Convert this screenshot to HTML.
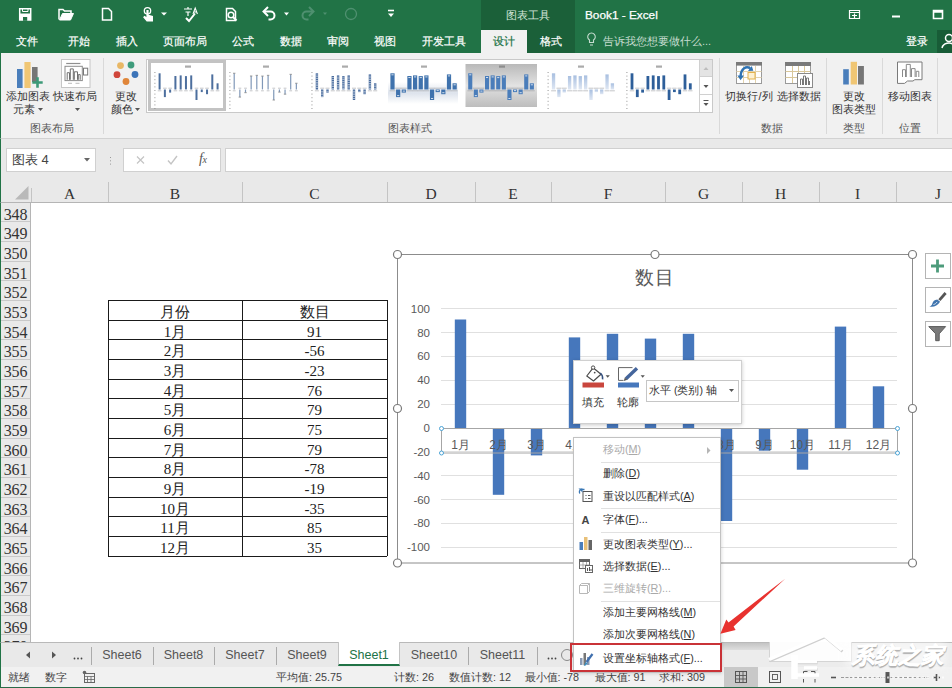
<!DOCTYPE html>
<html lang="zh">
<head>
<meta charset="utf-8">
<title>Book1 - Excel</title>
<style>
*{box-sizing:border-box;margin:0;padding:0}
html,body{width:952px;height:688px;overflow:hidden;background:#fff}
body{font-family:"Liberation Sans",sans-serif;font-size:12px;color:#333;position:relative}
.abs{position:absolute}
.t{position:absolute;white-space:nowrap;line-height:1}
.c{position:absolute;white-space:nowrap;line-height:1;text-align:center}
svg{position:absolute;overflow:visible}
#title{left:0;top:0;width:952px;height:53px;background:#217346}
#title .t,#title .c{color:#fff}
.mtab{font-size:11px;top:35.600px;width:60px;-webkit-text-stroke:0.2px currentColor}
#ribbon{left:0;top:53px;width:952px;height:86px;background:#f1f1f1;border-bottom:1px solid #d2d2d2;border-left:1px solid #217346}
.rl{font-size:11px;color:#333}
.gl{font-size:11px;color:#555}
.vsep{position:absolute;top:5px;width:1px;height:76px;background:#d9d9d9}
#fbar{left:0;top:139px;width:952px;height:41px;background:#e9e9e9;border-left:1px solid #217346}
#colhdr{left:0;top:180px;width:952px;height:23px;background:#e9e9e9;border-bottom:1px solid #b5b5b5;border-left:1px solid #217346}
#colhdr .c{font-family:"Liberation Serif",serif;font-size:15.5px;color:#333;top:5.5px}
.cs{position:absolute;top:2px;width:1px;height:20px;background:#c4c4c4}
#rowhdr{left:0;top:203px;width:31px;height:439px;background:#e9e9e9;border-right:1px solid #b5b5b5;border-left:1px solid #217346;overflow:hidden}
#rowhdr div{position:absolute;left:0;width:29px;font-family:"Liberation Serif",serif;font-size:16px;line-height:24px;color:#333;text-align:center;border-bottom:1px solid #c9c9c9;letter-spacing:-0.2px}
#tbl{left:108px;top:300px;width:280px;height:256px}
#tbl .cell{position:absolute;font-family:"Liberation Serif",serif;font-size:15px;text-align:center;color:#222;white-space:nowrap}
.yl{position:absolute;width:40px;left:390px;text-align:right;font-size:11.5px;line-height:12px;color:#595959}
.xl{position:absolute;width:38px;text-align:center;font-size:12px;line-height:14px;color:#595959;top:438px;white-space:nowrap}
#cmenu{left:573px;top:437px;width:148px;height:236px;background:#fff;border:1px solid #c2c2c2;box-shadow:1px 1px 3px rgba(0,0,0,.12)}
#cmenu .mi{position:absolute;left:29px;font-size:10.8px;line-height:14px;color:#333;white-space:nowrap}
#cmenu .dis{color:#a9a9a9}
#cmenu .ms{position:absolute;left:27px;width:119px;height:1px;background:#e1e1e1}
#tabs{left:0;top:642px;width:952px;height:25px;background:#e9e9e9;border-top:1px solid #b9b9b9;border-left:1px solid #217346}
#tabs .c{font-size:12.5px;color:#555;top:6px;width:62px}
.ts{position:absolute;top:4px;width:1px;height:18px;background:#ababab}
#status{left:0;top:667px;width:952px;height:21px;background:#f1f1f1;border-bottom:1.500px solid #2a6a48;border-left:1px solid #217346}
#status .t{font-size:10.800px;color:#444;top:4.500px}
.cj{font-family:"Liberation Sans",sans-serif}
</style>
</head>
<body>
<div id="title" class="abs">
  <div class="abs" style="left:481px;top:0;width:94px;height:53px;background:#1b6039"></div>
  <div class="abs" style="left:481px;top:30px;width:46px;height:23px;background:#f1f1f1"></div>
  <div class="abs" style="left:937px;top:30px;width:15px;height:23px;background:#185c37"></div>
  <div class="c" style="left:481px;top:10px;width:94px;font-size:11px;color:#d3e6da">图表工具</div>
  <div class="t" style="left:585px;top:10.200px;font-size:11.800px;-webkit-text-stroke:0.25px #fff">Book1 - Excel</div>
  <div class="c mtab" style="left:-3px">文件</div>
  <div class="c mtab" style="left:49px">开始</div>
  <div class="c mtab" style="left:97px">插入</div>
  <div class="c mtab" style="left:155px">页面布局</div>
  <div class="c mtab" style="left:213px">公式</div>
  <div class="c mtab" style="left:261px">数据</div>
  <div class="c mtab" style="left:308px">审阅</div>
  <div class="c mtab" style="left:355px">视图</div>
  <div class="c mtab" style="left:414px">开发工具</div>
  <div class="c mtab" style="left:474px;color:#217346">设计</div>
  <div class="c mtab" style="left:521px">格式</div>
  <div class="t" style="left:603px;top:35.600px;font-size:11px;color:#c5dccf">告诉我您想要做什么...</div>
  <div class="t" style="left:906px;top:35.600px;font-size:11px;-webkit-text-stroke:0.2px #fff">登录</div>
  <svg width="952" height="53" style="left:0;top:0" fill="none" stroke="#fff" stroke-width="1.5">
    <!-- save -->
    <path d="M19.700 8.700h11v11.300h-11z"/><rect x="19.700" y="13.500" width="11" height="6.500" fill="#fff" stroke="none"/><rect x="23" y="17" width="4.200" height="3.800" fill="#217346" stroke="none"/><path d="M22.500 9v2.500h5.500v-2.500" stroke-width="1"/>
    <!-- open folder -->
    <path d="M59 19.500v-10h4l1.500 1.500h6.500v2.500" />
    <path d="M59.500 20l3-6.500h11l-3 6.500z" fill="#fff" stroke-width="1"/>
    <!-- new doc -->
    <path d="M102.500 8.500h6l3 3v8.500h-9z"/>
    <!-- touch -->
    <circle cx="147.500" cy="10.800" r="3.200" stroke-width="1.300"/>
    <path d="M146.400 10v7l-2-1.200-1.300 1.500 3.600 4.200h6.300v-5.500l-4.400-1.200v-4.800z" fill="#fff" stroke="none"/>
    <path d="M161 12.500h6l-3 3z" fill="#fff" stroke="none"/>
    <!-- spell -->
    <path d="M186 18l3 3 6-7.500" stroke-width="2"/>
    <path d="M184 9h8 M188 7v2 M185.500 12h5 M188 12v4" stroke-width="1.200"/>
    <path d="M193 14l2.200-6 2.200 6 M193.800 12h2.800" stroke-width="1.100"/>
    <!-- print preview -->
    <path d="M226.500 8.500h6l3 3v9h-9z"/>
    <circle cx="231" cy="15" r="2.800" />
    <path d="M233 17l3.500 3.500" stroke-width="2"/>
    <!-- undo -->
    <path d="M264.500 11.500h6a4 4 0 0 1 0 8h-2" stroke-width="2"/>
    <path d="M268 7l-4.500 4.500 4.500 4.500" stroke-width="2"/>
    <path d="M284 12.500h5l-2.500 3z" fill="#fff" stroke="none"/>
    <!-- redo (disabled) -->
    <g stroke="#4f9070"><path d="M312.500 11.500h-6a4 4 0 0 0 0 8h2" stroke-width="2"/>
    <path d="M309 7l4.500 4.500-4.500 4.500" stroke-width="2"/>
    <path d="M323 12.500h4l-2 2.500z" fill="#4f9070" stroke="none"/>
    <circle cx="351" cy="14" r="5.500" stroke-width="1.300"/></g>
    <!-- customize -->
    <path d="M388 10.500h6" stroke-width="1.600"/><path d="M388 13.500h6l-3 3.500z" fill="#fff" stroke="none"/>
    <!-- window controls -->
    <path d="M849.500 10.500h10v8h-10z M849.500 12.500h10 M852 15.500h5 M854.500 13.500v4.500" stroke-width="1.200"/>
    <path d="M892 16.500h8" stroke-width="2"/>
    <path d="M933.500 10.500h9v8h-9z M933.500 12h9" stroke-width="1.600"/>
    <!-- bulb -->
    <path d="M589.500 40a3.800 3.800 0 1 1 4 0v2.500h-4z M590 45h3" stroke="#c5dccf" stroke-width="1.100"/>
    <!-- person -->
    <circle cx="949" cy="38" r="3.500" stroke-width="1.500"/><path d="M942 48a7 6 0 0 1 12-3" stroke-width="1.500"/>
  </svg>
</div>
<div id="ribbon" class="abs">
<svg width="30" height="30" style="left:15px;top:7px">
<rect x="1" y="9" width="5.600" height="19" fill="#4a7ebb"/><rect x="8.400" y="2" width="6.200" height="26" fill="#f0c674"/><rect x="16" y="7" width="5.600" height="15" fill="#767676"/>
<path d="M16.300 22.500h10.400 M21.500 17.300v10.400" stroke="#3d9a78" stroke-width="2.600" fill="none"/></svg>
<svg width="30" height="30" style="left:60px;top:6px" fill="none">
<rect x="0.500" y="0.500" width="28.500" height="28" fill="#fff" stroke="#c6c6c6"/>
<path d="M5.200 4.500h14.200" stroke="#8f8f8f" stroke-width="1.200"/>
<rect x="4" y="7.300" width="17.300" height="14.300" stroke="#8c8c8c"/>
<path d="M6.200 20.800v-7.100h2.300v7.100 M9.300 20.800v-10.900h3v10.900 M13.300 20.800v-8h3.200v8 M17.300 20.800v-5.200h1.900v5.200" stroke="#707070"/>
<rect x="22.500" y="9.200" width="4.200" height="6.800" stroke="#777"/>
<path d="M7 24.300h4 M14.500 24.300h4" stroke="#bbb"/></svg>
<div class="c rl" style="left:-3.5px;top:38px;width:60px">添加图表</div>
<div class="c rl" style="left:-7px;top:51px;width:60px">元素</div>
<div class="c rl" style="left:44.400000000000006px;top:38px;width:60px">快速布局</div>
<svg width="6" height="4" style="left:37px;top:55px"><path d="M0 0h5l-2.500 3z" fill="#555"/></svg>
<svg width="6" height="4" style="left:73.5px;top:55px"><path d="M0 0h5l-2.500 3z" fill="#555"/></svg>
<div class="c gl" style="left:21px;top:70px;width:60px">图表布局</div>
<div class="vsep" style="left:102px"></div>
<svg width="30" height="30" style="left:110px;top:5px">
<circle cx="9.500" cy="7.600" r="3.400" fill="#e8b765"/><circle cx="20" cy="7" r="3.400" fill="#3f9c7c"/>
<circle cx="6" cy="16.700" r="3.400" fill="#d0463b"/><circle cx="24" cy="16.500" r="3.400" fill="#3c74b8"/>
<circle cx="15" cy="23.500" r="3.400" fill="#e0863a"/></svg>
<div class="c rl" style="left:95px;top:38px;width:60px">更改</div>
<div class="c rl" style="left:91px;top:51px;width:60px">颜色</div>
<svg width="6" height="4" style="left:134px;top:55px"><path d="M0 0h5l-2.500 3z" fill="#555"/></svg>
<div class="abs" style="left:145px;top:6px;width:567px;height:54px;background:#fff;border:1px solid #c9c9c9"></div>
<svg width="78" height="51" style="left:146.7px;top:7px"><rect x="1.500" y="1.500" width="75" height="48" fill="#fff" stroke="#c3c3c3" stroke-width="3"/><rect x="37.0" y="5.500" width="6" height="2.200" fill="#666" opacity=".55"/><rect x="6.1" y="12.0" width="1.500" height="1" fill="#8a8a8a" opacity=".6"/><rect x="6.1" y="15.6" width="1.500" height="1" fill="#8a8a8a" opacity=".6"/><rect x="6.1" y="19.2" width="1.500" height="1" fill="#8a8a8a" opacity=".6"/><rect x="6.1" y="22.8" width="1.500" height="1" fill="#8a8a8a" opacity=".6"/><rect x="6.1" y="26.4" width="1.500" height="1" fill="#8a8a8a" opacity=".6"/><rect x="6.1" y="30.0" width="1.500" height="1" fill="#8a8a8a" opacity=".6"/><rect x="6.1" y="33.6" width="1.500" height="1" fill="#8a8a8a" opacity=".6"/><rect x="6.1" y="37.2" width="1.500" height="1" fill="#8a8a8a" opacity=".6"/><rect x="6.1" y="40.8" width="1.500" height="1" fill="#8a8a8a" opacity=".6"/><rect x="6.1" y="44.4" width="1.500" height="1" fill="#8a8a8a" opacity=".6"/><rect x="6.1" y="48.0" width="1.500" height="1" fill="#8a8a8a" opacity=".6"/><rect x="10.60" y="13.3" width="2.0" height="16.2" fill="#4d6f9e"/><rect x="9.80" y="30.3" width="3.6" height="1" fill="#8b8f96" opacity=".5"/><rect x="15.87" y="29.5" width="2.0" height="7.6" fill="#4d6f9e"/><rect x="15.07" y="27.7" width="3.6" height="1" fill="#8b8f96" opacity=".5"/><rect x="21.14" y="29.5" width="2.0" height="3.1" fill="#4d6f9e"/><rect x="20.34" y="27.7" width="3.6" height="1" fill="#8b8f96" opacity=".5"/><rect x="26.41" y="16.0" width="2.0" height="13.5" fill="#4d6f9e"/><rect x="25.61" y="30.3" width="3.6" height="1" fill="#8b8f96" opacity=".5"/><rect x="31.68" y="15.4" width="2.0" height="14.1" fill="#4d6f9e"/><rect x="30.88" y="30.3" width="3.6" height="1" fill="#8b8f96" opacity=".5"/><rect x="36.95" y="16.1" width="2.0" height="13.3" fill="#4d6f9e"/><rect x="36.15" y="30.3" width="3.6" height="1" fill="#8b8f96" opacity=".5"/><rect x="42.22" y="15.4" width="2.0" height="14.1" fill="#4d6f9e"/><rect x="41.42" y="30.3" width="3.6" height="1" fill="#8b8f96" opacity=".5"/><rect x="47.49" y="29.5" width="2.0" height="10.5" fill="#4d6f9e"/><rect x="46.69" y="27.7" width="3.6" height="1" fill="#8b8f96" opacity=".5"/><rect x="52.76" y="29.5" width="2.0" height="2.6" fill="#4d6f9e"/><rect x="51.96" y="27.7" width="3.6" height="1" fill="#8b8f96" opacity=".5"/><rect x="58.03" y="29.5" width="2.0" height="4.7" fill="#4d6f9e"/><rect x="57.23" y="27.7" width="3.6" height="1" fill="#8b8f96" opacity=".5"/><rect x="63.30" y="14.4" width="2.0" height="15.1" fill="#4d6f9e"/><rect x="62.50" y="30.3" width="3.6" height="1" fill="#8b8f96" opacity=".5"/><rect x="68.57" y="23.3" width="2.0" height="6.2" fill="#4d6f9e"/><rect x="67.77" y="30.3" width="3.6" height="1" fill="#8b8f96" opacity=".5"/></svg>
<svg width="78" height="51" style="left:225.3px;top:7px"><rect x="37.0" y="5.500" width="6" height="2.200" fill="#666" opacity=".55"/><rect x="3.1" y="12.0" width="1.500" height="1" fill="#8a8a8a" opacity=".6"/><rect x="3.1" y="15.6" width="1.500" height="1" fill="#8a8a8a" opacity=".6"/><rect x="3.1" y="19.2" width="1.500" height="1" fill="#8a8a8a" opacity=".6"/><rect x="3.1" y="22.8" width="1.500" height="1" fill="#8a8a8a" opacity=".6"/><rect x="3.1" y="26.4" width="1.500" height="1" fill="#8a8a8a" opacity=".6"/><rect x="3.1" y="30.0" width="1.500" height="1" fill="#8a8a8a" opacity=".6"/><rect x="3.1" y="33.6" width="1.500" height="1" fill="#8a8a8a" opacity=".6"/><rect x="3.1" y="37.2" width="1.500" height="1" fill="#8a8a8a" opacity=".6"/><rect x="3.1" y="40.8" width="1.500" height="1" fill="#8a8a8a" opacity=".6"/><rect x="3.1" y="44.4" width="1.500" height="1" fill="#8a8a8a" opacity=".6"/><rect x="3.1" y="48.0" width="1.500" height="1" fill="#8a8a8a" opacity=".6"/><rect x="7.60" y="13.3" width="1.2" height="16.2" fill="#8098b8"/><rect x="7.00" y="12.7" width="2.4" height="1.200" fill="#8a8a8a" opacity=".7"/><rect x="6.80" y="30.3" width="2.8" height="1" fill="#8b8f96" opacity=".5"/><rect x="13.25" y="29.5" width="1.2" height="7.6" fill="#8098b8"/><rect x="12.65" y="36.5" width="2.4" height="1.200" fill="#8a8a8a" opacity=".7"/><rect x="12.45" y="27.7" width="2.8" height="1" fill="#8b8f96" opacity=".5"/><rect x="18.90" y="29.5" width="1.2" height="3.1" fill="#8098b8"/><rect x="18.30" y="32.0" width="2.4" height="1.200" fill="#8a8a8a" opacity=".7"/><rect x="18.10" y="27.7" width="2.8" height="1" fill="#8b8f96" opacity=".5"/><rect x="24.55" y="16.0" width="1.2" height="13.5" fill="#8098b8"/><rect x="23.95" y="15.4" width="2.4" height="1.200" fill="#8a8a8a" opacity=".7"/><rect x="23.75" y="30.3" width="2.8" height="1" fill="#8b8f96" opacity=".5"/><rect x="30.20" y="15.4" width="1.2" height="14.1" fill="#8098b8"/><rect x="29.60" y="14.8" width="2.4" height="1.200" fill="#8a8a8a" opacity=".7"/><rect x="29.40" y="30.3" width="2.8" height="1" fill="#8b8f96" opacity=".5"/><rect x="35.85" y="16.1" width="1.2" height="13.3" fill="#8098b8"/><rect x="35.25" y="15.5" width="2.4" height="1.200" fill="#8a8a8a" opacity=".7"/><rect x="35.05" y="30.3" width="2.8" height="1" fill="#8b8f96" opacity=".5"/><rect x="41.50" y="15.4" width="1.2" height="14.1" fill="#8098b8"/><rect x="40.90" y="14.8" width="2.4" height="1.200" fill="#8a8a8a" opacity=".7"/><rect x="40.70" y="30.3" width="2.8" height="1" fill="#8b8f96" opacity=".5"/><rect x="47.15" y="29.5" width="1.2" height="10.5" fill="#8098b8"/><rect x="46.55" y="39.4" width="2.4" height="1.200" fill="#8a8a8a" opacity=".7"/><rect x="46.35" y="27.7" width="2.8" height="1" fill="#8b8f96" opacity=".5"/><rect x="52.80" y="29.5" width="1.2" height="2.6" fill="#8098b8"/><rect x="52.20" y="31.5" width="2.4" height="1.200" fill="#8a8a8a" opacity=".7"/><rect x="52.00" y="27.7" width="2.8" height="1" fill="#8b8f96" opacity=".5"/><rect x="58.45" y="29.5" width="1.2" height="4.7" fill="#8098b8"/><rect x="57.85" y="33.6" width="2.4" height="1.200" fill="#8a8a8a" opacity=".7"/><rect x="57.65" y="27.7" width="2.8" height="1" fill="#8b8f96" opacity=".5"/><rect x="64.10" y="14.4" width="1.2" height="15.1" fill="#8098b8"/><rect x="63.50" y="13.8" width="2.4" height="1.200" fill="#8a8a8a" opacity=".7"/><rect x="63.30" y="30.3" width="2.8" height="1" fill="#8b8f96" opacity=".5"/><rect x="69.75" y="23.3" width="1.2" height="6.2" fill="#8098b8"/><rect x="69.15" y="22.7" width="2.4" height="1.200" fill="#8a8a8a" opacity=".7"/><rect x="68.95" y="30.3" width="2.8" height="1" fill="#8b8f96" opacity=".5"/></svg>
<svg width="78" height="51" style="left:303.9px;top:7px"><rect x="37.0" y="5.500" width="6" height="2.200" fill="#666" opacity=".55"/><rect x="6.2" y="12.0" width="1.500" height="1" fill="#8a8a8a" opacity=".6"/><rect x="6.2" y="15.6" width="1.500" height="1" fill="#8a8a8a" opacity=".6"/><rect x="6.2" y="19.2" width="1.500" height="1" fill="#8a8a8a" opacity=".6"/><rect x="6.2" y="22.8" width="1.500" height="1" fill="#8a8a8a" opacity=".6"/><rect x="6.2" y="26.4" width="1.500" height="1" fill="#8a8a8a" opacity=".6"/><rect x="6.2" y="30.0" width="1.500" height="1" fill="#8a8a8a" opacity=".6"/><rect x="6.2" y="33.6" width="1.500" height="1" fill="#8a8a8a" opacity=".6"/><rect x="6.2" y="37.2" width="1.500" height="1" fill="#8a8a8a" opacity=".6"/><rect x="6.2" y="40.8" width="1.500" height="1" fill="#8a8a8a" opacity=".6"/><rect x="6.2" y="44.4" width="1.500" height="1" fill="#8a8a8a" opacity=".6"/><rect x="6.2" y="48.0" width="1.500" height="1" fill="#8a8a8a" opacity=".6"/><rect x="10.70" y="13.3" width="2.4" height="16.2" fill="#4a6d9f"/><rect x="10.70" y="14.7" width="2.4" height="0.600" fill="#fff" opacity=".8"/><rect x="10.70" y="16.5" width="2.4" height="0.600" fill="#fff" opacity=".8"/><rect x="10.70" y="18.3" width="2.4" height="0.600" fill="#fff" opacity=".8"/><rect x="10.70" y="20.1" width="2.4" height="0.600" fill="#fff" opacity=".8"/><rect x="10.70" y="21.9" width="2.4" height="0.600" fill="#fff" opacity=".8"/><rect x="10.70" y="23.7" width="2.4" height="0.600" fill="#fff" opacity=".8"/><rect x="10.70" y="25.5" width="2.4" height="0.600" fill="#fff" opacity=".8"/><rect x="10.70" y="27.3" width="2.4" height="0.600" fill="#fff" opacity=".8"/><rect x="9.90" y="30.3" width="4.0" height="1" fill="#8b8f96" opacity=".5"/><rect x="16.00" y="29.5" width="2.4" height="7.6" fill="#4a6d9f"/><rect x="16.00" y="30.9" width="2.4" height="0.600" fill="#fff" opacity=".8"/><rect x="16.00" y="32.7" width="2.4" height="0.600" fill="#fff" opacity=".8"/><rect x="16.00" y="34.5" width="2.4" height="0.600" fill="#fff" opacity=".8"/><rect x="16.00" y="36.3" width="2.4" height="0.600" fill="#fff" opacity=".8"/><rect x="15.20" y="27.7" width="4.0" height="1" fill="#8b8f96" opacity=".5"/><rect x="21.30" y="29.5" width="2.4" height="3.1" fill="#4a6d9f"/><rect x="21.30" y="30.9" width="2.4" height="0.600" fill="#fff" opacity=".8"/><rect x="20.50" y="27.7" width="4.0" height="1" fill="#8b8f96" opacity=".5"/><rect x="26.60" y="16.0" width="2.4" height="13.5" fill="#4a6d9f"/><rect x="26.60" y="17.4" width="2.4" height="0.600" fill="#fff" opacity=".8"/><rect x="26.60" y="19.2" width="2.4" height="0.600" fill="#fff" opacity=".8"/><rect x="26.60" y="21.0" width="2.4" height="0.600" fill="#fff" opacity=".8"/><rect x="26.60" y="22.8" width="2.4" height="0.600" fill="#fff" opacity=".8"/><rect x="26.60" y="24.6" width="2.4" height="0.600" fill="#fff" opacity=".8"/><rect x="26.60" y="26.4" width="2.4" height="0.600" fill="#fff" opacity=".8"/><rect x="26.60" y="28.2" width="2.4" height="0.600" fill="#fff" opacity=".8"/><rect x="25.80" y="30.3" width="4.0" height="1" fill="#8b8f96" opacity=".5"/><rect x="31.90" y="15.4" width="2.4" height="14.1" fill="#4a6d9f"/><rect x="31.90" y="16.8" width="2.4" height="0.600" fill="#fff" opacity=".8"/><rect x="31.90" y="18.6" width="2.4" height="0.600" fill="#fff" opacity=".8"/><rect x="31.90" y="20.4" width="2.4" height="0.600" fill="#fff" opacity=".8"/><rect x="31.90" y="22.2" width="2.4" height="0.600" fill="#fff" opacity=".8"/><rect x="31.90" y="24.0" width="2.4" height="0.600" fill="#fff" opacity=".8"/><rect x="31.90" y="25.8" width="2.4" height="0.600" fill="#fff" opacity=".8"/><rect x="31.90" y="27.6" width="2.4" height="0.600" fill="#fff" opacity=".8"/><rect x="31.10" y="30.3" width="4.0" height="1" fill="#8b8f96" opacity=".5"/><rect x="37.20" y="16.1" width="2.4" height="13.3" fill="#4a6d9f"/><rect x="37.20" y="17.6" width="2.4" height="0.600" fill="#fff" opacity=".8"/><rect x="37.20" y="19.4" width="2.4" height="0.600" fill="#fff" opacity=".8"/><rect x="37.20" y="21.1" width="2.4" height="0.600" fill="#fff" opacity=".8"/><rect x="37.20" y="22.9" width="2.4" height="0.600" fill="#fff" opacity=".8"/><rect x="37.20" y="24.8" width="2.4" height="0.600" fill="#fff" opacity=".8"/><rect x="37.20" y="26.6" width="2.4" height="0.600" fill="#fff" opacity=".8"/><rect x="37.20" y="28.4" width="2.4" height="0.600" fill="#fff" opacity=".8"/><rect x="36.40" y="30.3" width="4.0" height="1" fill="#8b8f96" opacity=".5"/><rect x="42.50" y="15.4" width="2.4" height="14.1" fill="#4a6d9f"/><rect x="42.50" y="16.8" width="2.4" height="0.600" fill="#fff" opacity=".8"/><rect x="42.50" y="18.6" width="2.4" height="0.600" fill="#fff" opacity=".8"/><rect x="42.50" y="20.4" width="2.4" height="0.600" fill="#fff" opacity=".8"/><rect x="42.50" y="22.2" width="2.4" height="0.600" fill="#fff" opacity=".8"/><rect x="42.50" y="24.0" width="2.4" height="0.600" fill="#fff" opacity=".8"/><rect x="42.50" y="25.8" width="2.4" height="0.600" fill="#fff" opacity=".8"/><rect x="42.50" y="27.6" width="2.4" height="0.600" fill="#fff" opacity=".8"/><rect x="41.70" y="30.3" width="4.0" height="1" fill="#8b8f96" opacity=".5"/><rect x="47.80" y="29.5" width="2.4" height="10.5" fill="#4a6d9f"/><rect x="47.80" y="30.9" width="2.4" height="0.600" fill="#fff" opacity=".8"/><rect x="47.80" y="32.7" width="2.4" height="0.600" fill="#fff" opacity=".8"/><rect x="47.80" y="34.5" width="2.4" height="0.600" fill="#fff" opacity=".8"/><rect x="47.80" y="36.3" width="2.4" height="0.600" fill="#fff" opacity=".8"/><rect x="47.80" y="38.1" width="2.4" height="0.600" fill="#fff" opacity=".8"/><rect x="47.00" y="27.7" width="4.0" height="1" fill="#8b8f96" opacity=".5"/><rect x="53.10" y="29.5" width="2.4" height="2.6" fill="#4a6d9f"/><rect x="53.10" y="30.9" width="2.4" height="0.600" fill="#fff" opacity=".8"/><rect x="52.30" y="27.7" width="4.0" height="1" fill="#8b8f96" opacity=".5"/><rect x="58.40" y="29.5" width="2.4" height="4.7" fill="#4a6d9f"/><rect x="58.40" y="30.9" width="2.4" height="0.600" fill="#fff" opacity=".8"/><rect x="58.40" y="32.7" width="2.4" height="0.600" fill="#fff" opacity=".8"/><rect x="57.60" y="27.7" width="4.0" height="1" fill="#8b8f96" opacity=".5"/><rect x="63.70" y="14.4" width="2.4" height="15.1" fill="#4a6d9f"/><rect x="63.70" y="15.8" width="2.4" height="0.600" fill="#fff" opacity=".8"/><rect x="63.70" y="17.6" width="2.4" height="0.600" fill="#fff" opacity=".8"/><rect x="63.70" y="19.4" width="2.4" height="0.600" fill="#fff" opacity=".8"/><rect x="63.70" y="21.2" width="2.4" height="0.600" fill="#fff" opacity=".8"/><rect x="63.70" y="23.0" width="2.4" height="0.600" fill="#fff" opacity=".8"/><rect x="63.70" y="24.8" width="2.4" height="0.600" fill="#fff" opacity=".8"/><rect x="63.70" y="26.6" width="2.4" height="0.600" fill="#fff" opacity=".8"/><rect x="63.70" y="28.4" width="2.4" height="0.600" fill="#fff" opacity=".8"/><rect x="62.90" y="30.3" width="4.0" height="1" fill="#8b8f96" opacity=".5"/><rect x="69.00" y="23.3" width="2.4" height="6.2" fill="#4a6d9f"/><rect x="69.00" y="24.7" width="2.4" height="0.600" fill="#fff" opacity=".8"/><rect x="69.00" y="26.5" width="2.4" height="0.600" fill="#fff" opacity=".8"/><rect x="69.00" y="28.3" width="2.4" height="0.600" fill="#fff" opacity=".8"/><rect x="68.20" y="30.3" width="4.0" height="1" fill="#8b8f96" opacity=".5"/></svg>
<svg width="78" height="51" style="left:382.5px;top:7px"><defs><linearGradient id="gw" x1="0" y1="0" x2="0" y2="1"><stop offset="0" stop-color="#fff"/><stop offset="0.5" stop-color="#dde3ec"/><stop offset="1" stop-color="#fff"/></linearGradient></defs><rect x="4" y="22" width="70" height="22" fill="url(#gw)"/><rect x="37.0" y="5.500" width="6" height="2.200" fill="#666" opacity=".55"/><rect x="6.40" y="13.3" width="4.2" height="16.2" fill="#3f72ad"/><rect x="7.40" y="14.3" width="2.2" height="1" fill="#fff" opacity=".75"/><rect x="5.60" y="30.3" width="5.800000000000001" height="1" fill="#8b8f96" opacity=".5"/><rect x="12.05" y="29.5" width="4.2" height="7.6" fill="#3f72ad"/><rect x="13.05" y="35.1" width="2.2" height="1" fill="#fff" opacity=".75"/><rect x="11.25" y="27.7" width="5.800000000000001" height="1" fill="#8b8f96" opacity=".5"/><rect x="17.70" y="29.5" width="4.2" height="3.1" fill="#3f72ad"/><rect x="18.70" y="30.6" width="2.2" height="1" fill="#fff" opacity=".75"/><rect x="16.90" y="27.7" width="5.800000000000001" height="1" fill="#8b8f96" opacity=".5"/><rect x="23.35" y="16.0" width="4.2" height="13.5" fill="#3f72ad"/><rect x="24.35" y="17.0" width="2.2" height="1" fill="#fff" opacity=".75"/><rect x="22.55" y="30.3" width="5.800000000000001" height="1" fill="#8b8f96" opacity=".5"/><rect x="29.00" y="15.4" width="4.2" height="14.1" fill="#3f72ad"/><rect x="30.00" y="16.4" width="2.2" height="1" fill="#fff" opacity=".75"/><rect x="28.20" y="30.3" width="5.800000000000001" height="1" fill="#8b8f96" opacity=".5"/><rect x="34.65" y="16.1" width="4.2" height="13.3" fill="#3f72ad"/><rect x="35.65" y="17.1" width="2.2" height="1" fill="#fff" opacity=".75"/><rect x="33.85" y="30.3" width="5.800000000000001" height="1" fill="#8b8f96" opacity=".5"/><rect x="40.30" y="15.4" width="4.2" height="14.1" fill="#3f72ad"/><rect x="41.30" y="16.4" width="2.2" height="1" fill="#fff" opacity=".75"/><rect x="39.50" y="30.3" width="5.800000000000001" height="1" fill="#8b8f96" opacity=".5"/><rect x="45.95" y="29.5" width="4.2" height="10.5" fill="#3f72ad"/><rect x="46.95" y="38.0" width="2.2" height="1" fill="#fff" opacity=".75"/><rect x="45.15" y="27.7" width="5.800000000000001" height="1" fill="#8b8f96" opacity=".5"/><rect x="51.60" y="29.5" width="4.2" height="2.6" fill="#3f72ad"/><rect x="52.60" y="30.1" width="2.2" height="1" fill="#fff" opacity=".75"/><rect x="50.80" y="27.7" width="5.800000000000001" height="1" fill="#8b8f96" opacity=".5"/><rect x="57.25" y="29.5" width="4.2" height="4.7" fill="#3f72ad"/><rect x="58.25" y="32.2" width="2.2" height="1" fill="#fff" opacity=".75"/><rect x="56.45" y="27.7" width="5.800000000000001" height="1" fill="#8b8f96" opacity=".5"/><rect x="62.90" y="14.4" width="4.2" height="15.1" fill="#3f72ad"/><rect x="63.90" y="15.4" width="2.2" height="1" fill="#fff" opacity=".75"/><rect x="62.10" y="30.3" width="5.800000000000001" height="1" fill="#8b8f96" opacity=".5"/><rect x="68.55" y="23.3" width="4.2" height="6.2" fill="#3f72ad"/><rect x="69.55" y="24.3" width="2.2" height="1" fill="#fff" opacity=".75"/><rect x="67.75" y="30.3" width="5.800000000000001" height="1" fill="#8b8f96" opacity=".5"/></svg>
<svg width="78" height="51" style="left:461.1px;top:7px"><defs><linearGradient id="gg" x1="0" y1="0" x2="0" y2="1"><stop offset="0" stop-color="#b9b9b9"/><stop offset="0.5" stop-color="#e2e2e2"/><stop offset="1" stop-color="#bdbdbd"/></linearGradient></defs><rect x="3.500" y="4" width="71.500" height="43" fill="url(#gg)"/><rect x="37.0" y="5.500" width="6" height="2.200" fill="#666" opacity=".55"/><rect x="6.20" y="13.3" width="4.1" height="16.2" fill="#4a7dba"/><rect x="7.20" y="14.3" width="2.0999999999999996" height="1" fill="#fff" opacity=".75"/><rect x="5.40" y="30.3" width="5.699999999999999" height="1" fill="#8b8f96" opacity=".5"/><rect x="11.80" y="29.5" width="4.1" height="7.6" fill="#4a7dba"/><rect x="12.80" y="35.1" width="2.0999999999999996" height="1" fill="#fff" opacity=".75"/><rect x="11.00" y="27.7" width="5.699999999999999" height="1" fill="#8b8f96" opacity=".5"/><rect x="17.40" y="29.5" width="4.1" height="3.1" fill="#4a7dba"/><rect x="18.40" y="30.6" width="2.0999999999999996" height="1" fill="#fff" opacity=".75"/><rect x="16.60" y="27.7" width="5.699999999999999" height="1" fill="#8b8f96" opacity=".5"/><rect x="23.00" y="16.0" width="4.1" height="13.5" fill="#4a7dba"/><rect x="24.00" y="17.0" width="2.0999999999999996" height="1" fill="#fff" opacity=".75"/><rect x="22.20" y="30.3" width="5.699999999999999" height="1" fill="#8b8f96" opacity=".5"/><rect x="28.60" y="15.4" width="4.1" height="14.1" fill="#4a7dba"/><rect x="29.60" y="16.4" width="2.0999999999999996" height="1" fill="#fff" opacity=".75"/><rect x="27.80" y="30.3" width="5.699999999999999" height="1" fill="#8b8f96" opacity=".5"/><rect x="34.20" y="16.1" width="4.1" height="13.3" fill="#4a7dba"/><rect x="35.20" y="17.1" width="2.0999999999999996" height="1" fill="#fff" opacity=".75"/><rect x="33.40" y="30.3" width="5.699999999999999" height="1" fill="#8b8f96" opacity=".5"/><rect x="39.80" y="15.4" width="4.1" height="14.1" fill="#4a7dba"/><rect x="40.80" y="16.4" width="2.0999999999999996" height="1" fill="#fff" opacity=".75"/><rect x="39.00" y="30.3" width="5.699999999999999" height="1" fill="#8b8f96" opacity=".5"/><rect x="45.40" y="29.5" width="4.1" height="10.5" fill="#4a7dba"/><rect x="46.40" y="38.0" width="2.0999999999999996" height="1" fill="#fff" opacity=".75"/><rect x="44.60" y="27.7" width="5.699999999999999" height="1" fill="#8b8f96" opacity=".5"/><rect x="51.00" y="29.5" width="4.1" height="2.6" fill="#4a7dba"/><rect x="52.00" y="30.1" width="2.0999999999999996" height="1" fill="#fff" opacity=".75"/><rect x="50.20" y="27.7" width="5.699999999999999" height="1" fill="#8b8f96" opacity=".5"/><rect x="56.60" y="29.5" width="4.1" height="4.7" fill="#4a7dba"/><rect x="57.60" y="32.2" width="2.0999999999999996" height="1" fill="#fff" opacity=".75"/><rect x="55.80" y="27.7" width="5.699999999999999" height="1" fill="#8b8f96" opacity=".5"/><rect x="62.20" y="14.4" width="4.1" height="15.1" fill="#4a7dba"/><rect x="63.20" y="15.4" width="2.0999999999999996" height="1" fill="#fff" opacity=".75"/><rect x="61.40" y="30.3" width="5.699999999999999" height="1" fill="#8b8f96" opacity=".5"/><rect x="67.80" y="23.3" width="4.1" height="6.2" fill="#4a7dba"/><rect x="68.80" y="24.3" width="2.0999999999999996" height="1" fill="#fff" opacity=".75"/><rect x="67.00" y="30.3" width="5.699999999999999" height="1" fill="#8b8f96" opacity=".5"/></svg>
<svg width="78" height="51" style="left:539.7px;top:7px"><defs><linearGradient id="gl" x1="0" y1="0" x2="0" y2="1"><stop offset="0" stop-color="#a8bfe0"/><stop offset="1" stop-color="#dfe7f3"/></linearGradient></defs><rect x="37.0" y="5.500" width="6" height="2.200" fill="#666" opacity=".55"/><rect x="6.4" y="12.0" width="1.500" height="1" fill="#8a8a8a" opacity=".6"/><rect x="6.4" y="15.6" width="1.500" height="1" fill="#8a8a8a" opacity=".6"/><rect x="6.4" y="19.2" width="1.500" height="1" fill="#8a8a8a" opacity=".6"/><rect x="6.4" y="22.8" width="1.500" height="1" fill="#8a8a8a" opacity=".6"/><rect x="6.4" y="26.4" width="1.500" height="1" fill="#8a8a8a" opacity=".6"/><rect x="6.4" y="30.0" width="1.500" height="1" fill="#8a8a8a" opacity=".6"/><rect x="6.4" y="33.6" width="1.500" height="1" fill="#8a8a8a" opacity=".6"/><rect x="6.4" y="37.2" width="1.500" height="1" fill="#8a8a8a" opacity=".6"/><rect x="6.4" y="40.8" width="1.500" height="1" fill="#8a8a8a" opacity=".6"/><rect x="6.4" y="44.4" width="1.500" height="1" fill="#8a8a8a" opacity=".6"/><rect x="6.4" y="48.0" width="1.500" height="1" fill="#8a8a8a" opacity=".6"/><rect x="10.90" y="13.3" width="3.3" height="16.2" fill="url(#gl)"/><rect x="10.10" y="30.3" width="4.9" height="1" fill="#8b8f96" opacity=".5"/><rect x="16.25" y="29.5" width="3.3" height="7.6" fill="url(#gl)"/><rect x="15.45" y="27.7" width="4.9" height="1" fill="#8b8f96" opacity=".5"/><rect x="21.60" y="29.5" width="3.3" height="3.1" fill="url(#gl)"/><rect x="20.80" y="27.7" width="4.9" height="1" fill="#8b8f96" opacity=".5"/><rect x="26.95" y="16.0" width="3.3" height="13.5" fill="url(#gl)"/><rect x="26.15" y="30.3" width="4.9" height="1" fill="#8b8f96" opacity=".5"/><rect x="32.30" y="15.4" width="3.3" height="14.1" fill="url(#gl)"/><rect x="31.50" y="30.3" width="4.9" height="1" fill="#8b8f96" opacity=".5"/><rect x="37.65" y="16.1" width="3.3" height="13.3" fill="url(#gl)"/><rect x="36.85" y="30.3" width="4.9" height="1" fill="#8b8f96" opacity=".5"/><rect x="43.00" y="15.4" width="3.3" height="14.1" fill="url(#gl)"/><rect x="42.20" y="30.3" width="4.9" height="1" fill="#8b8f96" opacity=".5"/><rect x="48.35" y="29.5" width="3.3" height="10.5" fill="url(#gl)"/><rect x="47.55" y="27.7" width="4.9" height="1" fill="#8b8f96" opacity=".5"/><rect x="53.70" y="29.5" width="3.3" height="2.6" fill="url(#gl)"/><rect x="52.90" y="27.7" width="4.9" height="1" fill="#8b8f96" opacity=".5"/><rect x="59.05" y="29.5" width="3.3" height="4.7" fill="url(#gl)"/><rect x="58.25" y="27.7" width="4.9" height="1" fill="#8b8f96" opacity=".5"/><rect x="64.40" y="14.4" width="3.3" height="15.1" fill="url(#gl)"/><rect x="63.60" y="30.3" width="4.9" height="1" fill="#8b8f96" opacity=".5"/><rect x="69.75" y="23.3" width="3.3" height="6.2" fill="url(#gl)"/><rect x="68.95" y="30.3" width="4.9" height="1" fill="#8b8f96" opacity=".5"/></svg>
<svg width="78" height="51" style="left:618.3px;top:7px"><rect x="37.0" y="5.500" width="6" height="2.200" fill="#666" opacity=".55"/><rect x="7.1" y="12.0" width="1.500" height="1" fill="#8a8a8a" opacity=".6"/><rect x="7.1" y="15.6" width="1.500" height="1" fill="#8a8a8a" opacity=".6"/><rect x="7.1" y="19.2" width="1.500" height="1" fill="#8a8a8a" opacity=".6"/><rect x="7.1" y="22.8" width="1.500" height="1" fill="#8a8a8a" opacity=".6"/><rect x="7.1" y="26.4" width="1.500" height="1" fill="#8a8a8a" opacity=".6"/><rect x="7.1" y="30.0" width="1.500" height="1" fill="#8a8a8a" opacity=".6"/><rect x="7.1" y="33.6" width="1.500" height="1" fill="#8a8a8a" opacity=".6"/><rect x="7.1" y="37.2" width="1.500" height="1" fill="#8a8a8a" opacity=".6"/><rect x="7.1" y="40.8" width="1.500" height="1" fill="#8a8a8a" opacity=".6"/><rect x="7.1" y="44.4" width="1.500" height="1" fill="#8a8a8a" opacity=".6"/><rect x="7.1" y="48.0" width="1.500" height="1" fill="#8a8a8a" opacity=".6"/><rect x="11.60" y="13.3" width="2.8" height="16.2" fill="#2e5f9a"/><rect x="10.80" y="30.3" width="4.4" height="1" fill="#8b8f96" opacity=".5"/><rect x="16.90" y="29.5" width="2.8" height="7.6" fill="#2e5f9a"/><rect x="16.10" y="27.7" width="4.4" height="1" fill="#8b8f96" opacity=".5"/><rect x="22.20" y="29.5" width="2.8" height="3.1" fill="#2e5f9a"/><rect x="21.40" y="27.7" width="4.4" height="1" fill="#8b8f96" opacity=".5"/><rect x="27.50" y="16.0" width="2.8" height="13.5" fill="#2e5f9a"/><rect x="26.70" y="30.3" width="4.4" height="1" fill="#8b8f96" opacity=".5"/><rect x="32.80" y="15.4" width="2.8" height="14.1" fill="#2e5f9a"/><rect x="32.00" y="30.3" width="4.4" height="1" fill="#8b8f96" opacity=".5"/><rect x="38.10" y="16.1" width="2.8" height="13.3" fill="#2e5f9a"/><rect x="37.30" y="30.3" width="4.4" height="1" fill="#8b8f96" opacity=".5"/><rect x="43.40" y="15.4" width="2.8" height="14.1" fill="#2e5f9a"/><rect x="42.60" y="30.3" width="4.4" height="1" fill="#8b8f96" opacity=".5"/><rect x="48.70" y="29.5" width="2.8" height="10.5" fill="#2e5f9a"/><rect x="47.90" y="27.7" width="4.4" height="1" fill="#8b8f96" opacity=".5"/><rect x="54.00" y="29.5" width="2.8" height="2.6" fill="#2e5f9a"/><rect x="53.20" y="27.7" width="4.4" height="1" fill="#8b8f96" opacity=".5"/><rect x="59.30" y="29.5" width="2.8" height="4.7" fill="#2e5f9a"/><rect x="58.50" y="27.7" width="4.4" height="1" fill="#8b8f96" opacity=".5"/><rect x="64.60" y="14.4" width="2.8" height="15.1" fill="#2e5f9a"/><rect x="63.80" y="30.3" width="4.4" height="1" fill="#8b8f96" opacity=".5"/><rect x="69.90" y="23.3" width="2.8" height="6.2" fill="#2e5f9a"/><rect x="69.10" y="30.3" width="4.4" height="1" fill="#8b8f96" opacity=".5"/></svg>
<div class="abs" style="left:698px;top:7px;width:13px;height:17px;background:#e4e4e4;border-left:1px solid #d0d0d0;border-bottom:1px solid #d0d0d0"></div>
<div class="abs" style="left:698px;top:24px;width:13px;height:18px;border-left:1px solid #d0d0d0;border-bottom:1px solid #d0d0d0"></div>
<div class="abs" style="left:698px;top:42px;width:13px;height:17px;border-left:1px solid #d0d0d0"></div>
<svg width="13" height="52" style="left:698px;top:7px">
<path d="M4.500 10h5l-2.500-3z" fill="#bdbdbd"/><path d="M4.500 25h5l-2.500 3z" fill="#555"/>
<path d="M4.500 40.500h5" stroke="#555"/><path d="M4.500 43h5l-2.500 3z" fill="#555"/></svg>
<div class="c gl" style="left:379px;top:70px;width:60px">图表样式</div>
<div class="vsep" style="left:718px"></div>
<svg width="28" height="26" style="left:735px;top:7.5px">
<rect x="0.500" y="1.500" width="25" height="21" fill="#fff" stroke="#9a9a9a"/><rect x="0" y="1" width="26" height="3.600" fill="#7a7a7a"/>
<path d="M0.500 10.500h25 M0.500 16.500h25 M7.500 5v17 M13.500 5v17 M19.500 5v17" stroke="#e3d3ad"/>
<rect x="12" y="11.500" width="7" height="6.500" fill="#fdf1d2" stroke="#e2b24d"/>
<path d="M14.200 7.300C10.500 4.600 5 7 4.600 15" stroke="#2f73b3" stroke-width="2.400" fill="none"/>
<path d="M17.300 9.800l-5.300 0.300 3.800-5.200z" fill="#2f73b3"/><path d="M4.600 19.200l-3.200-4.700h6.500z" fill="#2f73b3"/></svg>
<svg width="30" height="28" style="left:784.3px;top:8px">
<rect x="0.500" y="1.500" width="25" height="21" fill="#fff" stroke="#9a9a9a"/><rect x="0" y="1" width="26" height="4" fill="#7a7a7a"/>
<path d="M0.500 10.500h25 M0.500 16.500h25 M7.500 5v17 M13.500 5v17 M19.500 5v17" stroke="#d9c79a"/>
<rect x="12.500" y="12.500" width="15" height="14" fill="#fff" stroke="#8a8a8a"/>
<path d="M15.500 24v-6h2v6 M18.500 24v-9h2v9 M21.500 24v-7h2v7 M24.500 24v-4" stroke="#777" fill="none"/></svg>
<div class="c rl" style="left:718px;top:38px;width:60px">切换行/列</div>
<div class="c rl" style="left:768px;top:38px;width:60px">选择数据</div>
<div class="c gl" style="left:741px;top:70px;width:60px">数据</div>
<div class="vsep" style="left:825px"></div>
<svg width="24" height="26" style="left:841px;top:7px">
<rect x="1.200" y="9.200" width="5.600" height="15.300" fill="#4a7ebb"/><rect x="8.700" y="1.800" width="6.300" height="22.700" fill="#f0c674"/><rect x="16" y="6" width="5.900" height="18.500" fill="#767676"/></svg>
<div class="c rl" style="left:823px;top:38px;width:60px">更改</div>
<div class="c rl" style="left:823px;top:51px;width:60px">图表类型</div>
<div class="c gl" style="left:823px;top:70px;width:60px">类型</div>
<div class="vsep" style="left:881px"></div>
<svg width="28" height="26" style="left:895px;top:7px">
<path d="M1.500 2H26V19.700H18.800L17 21H11.500L8.500 23.400H1.500Z" fill="#fff" stroke="#7a7a7a"/>
<path d="M6.500 17v-7.300h3v7.300 M10.300 17v-12.600h4v12.600 M15.500 17v-8.400h3.600v8.400 M20.200 17v-5.700h2.600v5.700" stroke="#8a8a8a" fill="none"/></svg>
<div class="c rl" style="left:879px;top:38px;width:60px">移动图表</div>
<div class="c gl" style="left:879px;top:70px;width:60px">位置</div>
<div class="vsep" style="left:936px"></div>
</div>
<div id="fbar" class="abs">
<div class="abs" style="left:5px;top:9px;width:90px;height:24px;background:#fff;border:1px solid #d0d0d0"></div>
<div class="t" style="left:11px;top:14px;font-size:13px;color:#444">图表 4</div>
<svg width="8" height="5" style="left:83px;top:19px"><path d="M0 0h6l-3 3.500z" fill="#666"/></svg>
<svg width="3" height="12" style="left:107.5px;top:17.5px"><rect x="1" y="0" width="1" height="1" fill="#999"/><rect x="1" y="3.300" width="1" height="1" fill="#999"/><rect x="1" y="6.600" width="1" height="1" fill="#999"/></svg>
<div class="abs" style="left:122px;top:9px;width:98px;height:24px;background:#fff;border:1px solid #d0d0d0"></div>
<svg width="98" height="24" style="left:122px;top:9px" fill="none">
<path d="M14 8.500l7 7 M21 8.500l-7 7" stroke="#c4c4c4" stroke-width="1.200"/>
<path d="M45 12.500l3 3.500 6-8" stroke="#c4c4c4" stroke-width="1.400"/></svg>
<div class="t" style="left:198px;top:13px;font-family:'Liberation Serif',serif;font-style:italic;font-size:14px;color:#555;letter-spacing:-0.5px">f<span style="font-size:10px">x</span></div>
<div class="abs" style="left:224px;top:9px;width:728px;height:24px;background:#fff;border:1px solid #d0d0d0;border-right:0"></div>
</div>
<div id="colhdr" class="abs">
<div class="c" style="left:30px;width:77px">A</div>
<div class="cs" style="left:107px"></div>
<div class="c" style="left:107px;width:134px">B</div>
<div class="cs" style="left:241px"></div>
<div class="c" style="left:241px;width:145px">C</div>
<div class="cs" style="left:386px"></div>
<div class="c" style="left:386px;width:88px">D</div>
<div class="cs" style="left:474px"></div>
<div class="c" style="left:474px;width:76px">E</div>
<div class="cs" style="left:550px"></div>
<div class="c" style="left:550px;width:114px">F</div>
<div class="cs" style="left:664px"></div>
<div class="c" style="left:664px;width:77px">G</div>
<div class="cs" style="left:741px"></div>
<div class="c" style="left:741px;width:77px">H</div>
<div class="cs" style="left:818px"></div>
<div class="c" style="left:818px;width:77px">I</div>
<div class="cs" style="left:895px"></div>
<div class="c" style="left:895px;width:84px">J</div>
<div class="cs" style="left:979px"></div>
<svg width="14" height="14" style="left:13.500px;top:6px"><path d="M13.500 0v13.500h-13.500z" fill="#b9b9b9"/></svg>
<div class="cs" style="left:29.500px;top:8px;height:14px"></div>
</div>
<div id="rowhdr" class="abs">
<div style="top:-0.40px;height:19.67px">348</div>
<div style="top:19.27px;height:19.67px">349</div>
<div style="top:38.94px;height:19.67px">350</div>
<div style="top:58.61px;height:19.67px">351</div>
<div style="top:78.28px;height:19.67px">352</div>
<div style="top:97.95px;height:19.67px">353</div>
<div style="top:117.62px;height:19.67px">354</div>
<div style="top:137.29px;height:19.67px">355</div>
<div style="top:156.96px;height:19.67px">356</div>
<div style="top:176.63px;height:19.67px">357</div>
<div style="top:196.30px;height:19.67px">358</div>
<div style="top:215.97px;height:19.67px">359</div>
<div style="top:235.64px;height:19.67px">360</div>
<div style="top:255.31px;height:19.67px">361</div>
<div style="top:274.98px;height:19.67px">362</div>
<div style="top:294.65px;height:19.67px">363</div>
<div style="top:314.32px;height:19.67px">364</div>
<div style="top:333.99px;height:19.67px">365</div>
<div style="top:353.66px;height:19.67px">366</div>
<div style="top:373.33px;height:19.67px">367</div>
<div style="top:393.00px;height:19.67px">368</div>
<div style="top:412.67px;height:19.67px">369</div>
<div style="top:432.34px;height:19.67px">370</div>
</div>
<div id="tbl" class="abs">
<div class="cell" style="left:0;top:0.00px;width:134px;height:19.67px;line-height:24.67px"><span class="cj">月份</span></div>
<div class="cell" style="left:134px;top:0.00px;width:145px;height:19.67px;line-height:24.67px"><span class="cj">数目</span></div>
<div class="cell" style="left:0;top:19.67px;width:134px;height:19.67px;line-height:24.67px">1<span class="cj">月</span></div>
<div class="cell" style="left:134px;top:19.67px;width:145px;height:19.67px;line-height:24.67px">91</div>
<div class="cell" style="left:0;top:39.34px;width:134px;height:19.67px;line-height:24.67px">2<span class="cj">月</span></div>
<div class="cell" style="left:134px;top:39.34px;width:145px;height:19.67px;line-height:24.67px">-56</div>
<div class="cell" style="left:0;top:59.01px;width:134px;height:19.67px;line-height:24.67px">3<span class="cj">月</span></div>
<div class="cell" style="left:134px;top:59.01px;width:145px;height:19.67px;line-height:24.67px">-23</div>
<div class="cell" style="left:0;top:78.68px;width:134px;height:19.67px;line-height:24.67px">4<span class="cj">月</span></div>
<div class="cell" style="left:134px;top:78.68px;width:145px;height:19.67px;line-height:24.67px">76</div>
<div class="cell" style="left:0;top:98.35px;width:134px;height:19.67px;line-height:24.67px">5<span class="cj">月</span></div>
<div class="cell" style="left:134px;top:98.35px;width:145px;height:19.67px;line-height:24.67px">79</div>
<div class="cell" style="left:0;top:118.02px;width:134px;height:19.67px;line-height:24.67px">6<span class="cj">月</span></div>
<div class="cell" style="left:134px;top:118.02px;width:145px;height:19.67px;line-height:24.67px">75</div>
<div class="cell" style="left:0;top:137.69px;width:134px;height:19.67px;line-height:24.67px">7<span class="cj">月</span></div>
<div class="cell" style="left:134px;top:137.69px;width:145px;height:19.67px;line-height:24.67px">79</div>
<div class="cell" style="left:0;top:157.36px;width:134px;height:19.67px;line-height:24.67px">8<span class="cj">月</span></div>
<div class="cell" style="left:134px;top:157.36px;width:145px;height:19.67px;line-height:24.67px">-78</div>
<div class="cell" style="left:0;top:177.03px;width:134px;height:19.67px;line-height:24.67px">9<span class="cj">月</span></div>
<div class="cell" style="left:134px;top:177.03px;width:145px;height:19.67px;line-height:24.67px">-19</div>
<div class="cell" style="left:0;top:196.70px;width:134px;height:19.67px;line-height:24.67px">10<span class="cj">月</span></div>
<div class="cell" style="left:134px;top:196.70px;width:145px;height:19.67px;line-height:24.67px">-35</div>
<div class="cell" style="left:0;top:216.37px;width:134px;height:19.67px;line-height:24.67px">11<span class="cj">月</span></div>
<div class="cell" style="left:134px;top:216.37px;width:145px;height:19.67px;line-height:24.67px">85</div>
<div class="cell" style="left:0;top:236.04px;width:134px;height:19.67px;line-height:24.67px">12<span class="cj">月</span></div>
<div class="cell" style="left:134px;top:236.04px;width:145px;height:19.67px;line-height:24.67px">35</div>
<svg width="280" height="256.7" style="left:0;top:0" shape-rendering="crispEdges" stroke="#1a1a1a" stroke-width="1" fill="none"><path d="M0 0.5h279"/><path d="M0 20.5h279"/><path d="M0 39.5h279"/><path d="M0 59.5h279"/><path d="M0 79.5h279"/><path d="M0 98.5h279"/><path d="M0 118.5h279"/><path d="M0 138.5h279"/><path d="M0 157.5h279"/><path d="M0 177.5h279"/><path d="M0 197.5h279"/><path d="M0 216.5h279"/><path d="M0 236.5h279"/><path d="M0 256.5h279"/><path d="M0.5 0v255.7"/><path d="M134.5 0v255.7"/><path d="M279.5 0v255.7"/></svg>
</div>
<div id="chart" class="abs" style="left:0;top:0;width:952px;height:688px">
<svg width="952" height="688" style="left:0;top:0"><rect x="397.500" y="254.500" width="515" height="308.500" fill="#fff" stroke="#8c8c8c" stroke-width="1"/><path d="M441 308.5H897" stroke="#e0e0e0" stroke-width="1"/><path d="M441 332.5H897" stroke="#e0e0e0" stroke-width="1"/><path d="M441 356.5H897" stroke="#e0e0e0" stroke-width="1"/><path d="M441 380.5H897" stroke="#e0e0e0" stroke-width="1"/><path d="M441 404.5H897" stroke="#e0e0e0" stroke-width="1"/><path d="M441 428.5H897" stroke="#bfbfbf" stroke-width="1"/><path d="M441 451.5H897" stroke="#e0e0e0" stroke-width="1"/><path d="M441 475.5H897" stroke="#e0e0e0" stroke-width="1"/><path d="M441 499.5H897" stroke="#e0e0e0" stroke-width="1"/><path d="M441 523.5H897" stroke="#e0e0e0" stroke-width="1"/><path d="M441 547.5H897" stroke="#e0e0e0" stroke-width="1"/><rect x="454.8" y="319.5" width="11.400" height="108.5" fill="#4677bc"/><rect x="492.8" y="428.0" width="11.400" height="66.8" fill="#4677bc"/><rect x="530.8" y="428.0" width="11.400" height="27.4" fill="#4677bc"/><rect x="568.8" y="337.4" width="11.400" height="90.6" fill="#4677bc"/><rect x="606.8" y="333.8" width="11.400" height="94.2" fill="#4677bc"/><rect x="644.8" y="338.6" width="11.400" height="89.4" fill="#4677bc"/><rect x="682.8" y="333.8" width="11.400" height="94.2" fill="#4677bc"/><rect x="720.8" y="428.0" width="11.400" height="93.0" fill="#4677bc"/><rect x="758.8" y="428.0" width="11.400" height="22.7" fill="#4677bc"/><rect x="796.8" y="428.0" width="11.400" height="41.7" fill="#4677bc"/><rect x="834.8" y="326.6" width="11.400" height="101.4" fill="#4677bc"/><rect x="872.8" y="386.3" width="11.400" height="41.7" fill="#4677bc"/><rect x="441.500" y="428.500" width="456" height="24.500" fill="none" stroke="#a6a6a6" stroke-width="1"/><circle cx="441.5" cy="428.5" r="2" fill="#fff" stroke="#4aa3d6" stroke-width="1"/><circle cx="897.5" cy="428.5" r="2" fill="#fff" stroke="#4aa3d6" stroke-width="1"/><circle cx="441.5" cy="453" r="2" fill="#fff" stroke="#4aa3d6" stroke-width="1"/><circle cx="897.5" cy="453" r="2" fill="#fff" stroke="#4aa3d6" stroke-width="1"/><circle cx="397.5" cy="254.5" r="4" fill="#fff" stroke="#7a7a7a" stroke-width="1.200"/><circle cx="655" cy="254.5" r="4" fill="#fff" stroke="#7a7a7a" stroke-width="1.200"/><circle cx="912.5" cy="254.5" r="4" fill="#fff" stroke="#7a7a7a" stroke-width="1.200"/><circle cx="397.5" cy="408.5" r="4" fill="#fff" stroke="#7a7a7a" stroke-width="1.200"/><circle cx="912.5" cy="408.5" r="4" fill="#fff" stroke="#7a7a7a" stroke-width="1.200"/><circle cx="397.5" cy="563" r="4" fill="#fff" stroke="#7a7a7a" stroke-width="1.200"/><circle cx="655" cy="563" r="4" fill="#fff" stroke="#7a7a7a" stroke-width="1.200"/><circle cx="912.5" cy="563" r="4" fill="#fff" stroke="#7a7a7a" stroke-width="1.200"/></svg>
<div class="c" style="left:615px;top:268px;width:80px;font-family:'Liberation Sans',sans-serif;font-size:19px;color:#595959;letter-spacing:1px">数目</div>
<div class="yl" style="top:302.8px">100</div>
<div class="yl" style="top:326.6px">80</div>
<div class="yl" style="top:350.4px">60</div>
<div class="yl" style="top:374.3px">40</div>
<div class="yl" style="top:398.1px">20</div>
<div class="yl" style="top:422.0px">0</div>
<div class="yl" style="top:445.9px">-20</div>
<div class="yl" style="top:469.7px">-40</div>
<div class="yl" style="top:493.6px">-60</div>
<div class="yl" style="top:517.4px">-80</div>
<div class="yl" style="top:541.2px">-100</div>
<div class="xl" style="left:441.5px">1月</div>
<div class="xl" style="left:479.5px">2月</div>
<div class="xl" style="left:517.5px">3月</div>
<div class="xl" style="left:555.5px">4月</div>
<div class="xl" style="left:593.5px">5月</div>
<div class="xl" style="left:631.5px">6月</div>
<div class="xl" style="left:669.5px">7月</div>
<div class="xl" style="left:707.5px">8月</div>
<div class="xl" style="left:745.5px">9月</div>
<div class="xl" style="left:783.5px">10月</div>
<div class="xl" style="left:821.5px">11月</div>
<div class="xl" style="left:859.5px">12月</div>
<div class="abs" style="left:925px;top:253px;width:25.500px;height:25.500px;background:#fff;border:1px solid #b4b4b4"></div>
<div class="abs" style="left:925px;top:287px;width:25.500px;height:25.500px;background:#fff;border:1px solid #b4b4b4"></div>
<div class="abs" style="left:925px;top:321px;width:25.500px;height:25.500px;background:#fff;border:1px solid #b4b4b4"></div>
<svg width="27" height="100" style="left:925px;top:253px" fill="none">
<path d="M6 13h13 M12.500 6.500v13" stroke="#4d9b7b" stroke-width="2.800"/>
<path d="M20.600 40l-6.200 7.200" stroke="#555" stroke-width="2.800"/>
<path d="M4.300 53.600c4.500 0.800 8-0.500 10.800-4.800l-2.800-2.300c-2.800 0.200-4.500 2-5 4.200c-0.300 1.500-1.500 2.400-3 2.900z" fill="#3f74ae"/>
<path d="M8.500 51.500c1.500-0.300 2.800-1.200 3.600-2.600" stroke="#dfe9f5" stroke-width="1"/>
<path d="M3.800 73.600h16.800l-6.400 7.200v6.900h-3.500v-6.900z" fill="#7a7a7a" stroke="#5a5a5a" stroke-width="1"/></svg>
</div>
<div id="tabs" class="abs">
<svg width="80" height="24" style="left:0;top:0"><path d="M29 8.500v7l-4-3.500z" fill="#555"/><path d="M51 8.500v7l4-3.500z" fill="#555"/><circle cx="73.500" cy="15.500" r="0.900" fill="#444"/><circle cx="77" cy="15.500" r="0.900" fill="#444"/><circle cx="80.500" cy="15.500" r="0.900" fill="#444"/></svg>
<div class="c" style="left:90px;width:62px">Sheet6</div>
<div class="c" style="left:152px;width:61px">Sheet8</div>
<div class="c" style="left:213px;width:62px">Sheet7</div>
<div class="c" style="left:275px;width:62px">Sheet9</div>
<div class="abs" style="left:337px;top:-1px;width:62px;height:24px;background:#fff;border-bottom:2px solid #217346;border-left:1px solid #c4c4c4;border-right:1px solid #c4c4c4"></div>
<div class="c" style="left:337px;width:62px;color:#217346">Sheet1</div>
<div class="c" style="left:399px;width:68px">Sheet10</div>
<div class="c" style="left:467px;width:69px">Sheet11</div>
<div class="ts" style="left:90px"></div>
<div class="ts" style="left:152px"></div>
<div class="ts" style="left:213px"></div>
<div class="ts" style="left:275px"></div>
<div class="ts" style="left:467px"></div>
<div class="ts" style="left:536px"></div>
<svg width="30" height="24" style="left:540px;top:0"><circle cx="7.500" cy="15.500" r="0.900" fill="#444"/><circle cx="11" cy="15.500" r="0.900" fill="#444"/><circle cx="14.500" cy="15.500" r="0.900" fill="#444"/><circle cx="26" cy="12" r="5.500" fill="none" stroke="#8a8a8a"/></svg>
<div class="abs" style="left:721px;top:0;width:231px;height:24px;background:#ececec"></div>
<div class="abs" style="left:721px;top:0;width:48px;height:7px;background:linear-gradient(#c4c4c4,#dedede)"></div>
</div>
<div id="status" class="abs">
<div class="t" style="left:6.6px">就绪</div>
<div class="t" style="left:44.4px">数字</div>
<div class="t" style="left:275px">平均值: 25.75</div>
<div class="t" style="left:393px">计数: 26</div>
<div class="t" style="left:448px">数值计数: 12</div>
<div class="t" style="left:523.5px">最小值: -78</div>
<div class="t" style="left:593.5px">最大值: 91</div>
<div class="t" style="left:658px">求和: 309</div>
<svg width="14" height="14" style="left:81px;top:3px" fill="none" stroke="#666"><rect x="2.500" y="3.500" width="10" height="9"/><path d="M2.500 6.500h10 M5.500 6.500v6 M9 6.500v6 M2.500 9.500h10" stroke-width=".8"/><circle cx="2.500" cy="2.500" r="1.800" fill="#666" stroke="none"/></svg>
<div class="abs" style="left:723px;top:0;width:34px;height:20px;background:#c8c8c8"></div>
<svg width="230" height="20" style="left:722px;top:0" fill="none" stroke="#555">
<rect x="12.500" y="4.500" width="11" height="11"/><path d="M12.500 8.500h11 M12.500 12h11 M16.500 4.500v11 M20 4.500v11" stroke-width=".9"/>
<rect x="46.500" y="4.500" width="11" height="11"/><rect x="49.500" y="7.500" width="5" height="5" stroke-width=".9"/>
<path d="M80.500 9v-4.500h4 M88 4.500h4v4.500 M80.500 12v3.500 M92 12v3.500" />
<path d="M108 10.500h5" stroke-width="1.600"/>
<path d="M118 10.500h88" stroke="#9a9a9a" stroke-dasharray="3 1.500"/>
<rect x="162.500" y="5" width="4" height="11" fill="#555" stroke="none"/>
<path d="M210 10.500h7 M213.500 7v7" stroke-width="1.600"/></svg>
</div>
<div id="float" class="abs" style="left:0;top:0;width:952px;height:688px">
<div class="abs" style="left:573px;top:360px;width:169px;height:64px;background:#fff;border:1px solid #d0d0d0;box-shadow:0 1px 4px rgba(0,0,0,.22)"></div>
<svg width="170" height="64" style="left:573px;top:360px" fill="none">
<rect x="9.500" y="22.500" width="21.500" height="5" fill="#c9463d"/>
<rect x="45" y="22.500" width="21" height="5" fill="#4677bc"/>
<path d="M20.100 7.800L28 14.300L20.500 21L13.800 16Z" fill="#fff" stroke="#4a4a4a" stroke-width="1.200" stroke-linejoin="round"/>
<circle cx="20.100" cy="7.600" r="1.700" stroke="#4a4a4a" stroke-width="1" fill="#fff"/>
<circle cx="21.700" cy="12.600" r="0.900" fill="#4a4a4a"/>
<path d="M27.300 13c1.800 1.500 2.600 3.500 2.300 6.300" stroke="#34507e" stroke-width="1.500"/>
<path d="M32.600 15.200h4.200l-2.100 2.600z" fill="#555"/>
<path d="M59.500 7.600H45.500V20.400H50.500" stroke="#666" stroke-width="1"/>
<path d="M64 8.300L53 18.800" stroke="#44659c" stroke-width="3.400"/><path d="M50.800 21l1-3.600 2.600 2.400z" fill="#555"/>
<path d="M67.600 15.200h4.200l-2.100 2.600z" fill="#555"/>
<rect x="73.500" y="20.500" width="92" height="21" fill="#fff" stroke="#c6c6c6"/>
<path d="M156 29h5l-2.500 3z" fill="#555"/>
</svg>
<div class="c" style="left:573px;top:397px;width:40px;font-size:11px;color:#333">填充</div>
<div class="c" style="left:608px;top:397px;width:40px;font-size:11px;color:#333">轮廓</div>
<div class="t" style="left:649px;top:385px;font-size:10.5px;color:#333">水平 (类别) 轴</div>
<div id="cmenu" class="abs">
<div class="mi dis" style="top:4.2px">移动(<u>M</u>)</div>
<div class="mi" style="top:28.2px">删除(<u>D</u>)</div>
<div class="mi" style="top:50.7px">重设以匹配样式(<u>A</u>)</div>
<div class="mi" style="top:74.2px">字体(<u>F</u>)...</div>
<div class="mi" style="top:98.7px">更改图表类型(<u>Y</u>)...</div>
<div class="mi" style="top:121.2px">选择数据(<u>E</u>)...</div>
<div class="mi dis" style="top:143.2px">三维旋转(<u>R</u>)...</div>
<div class="mi" style="top:167.2px">添加主要网格线(<u>M</u>)</div>
<div class="mi" style="top:189.2px">添加次要网格线(<u>N</u>)</div>
<div class="mi" style="top:212.5px">设置坐标轴格式(<u>F</u>)...</div>
<div class="ms" style="top:23.5px"></div>
<div class="ms" style="top:70.0px"></div>
<div class="ms" style="top:94.0px"></div>
<div class="ms" style="top:162.5px"></div>
<svg width="8" height="8" style="left:131px;top:9px"><path d="M2 0l3.500 3.500-3.500 3.500z" fill="#b5b5b5"/></svg>
<svg width="24" height="236" style="left:2px;top:0" fill="none">
<g transform="translate(2.500,50)"><rect x="4.500" y="3.500" width="9" height="10" stroke="#555"/><path d="M7 7.500h1 M9.500 7.500h2.500 M7 10.500h1 M9.500 10.500h2.500" stroke="#555"/><path d="M6 1.500h-3.500a2.500 2.500 0 0 0-1 4" stroke="#3b78b5" stroke-width="1.300"/><path d="M0 0.500h4v4z" fill="#3b78b5"/></g>
<text x="5.500" y="85.800" font-family="Liberation Sans, sans-serif" font-weight="bold" font-size="11" fill="#444">A</text>
<g transform="translate(3,98)"><rect x="0.500" y="6" width="3.500" height="8" fill="#4a7ebb"/><rect x="5" y="1" width="3.500" height="13" fill="#e8c078"/><rect x="9.500" y="4" width="3.500" height="10" fill="#666"/></g>
<g transform="translate(3,121)"><rect x="0.500" y="0.500" width="10" height="9" stroke="#666" fill="#fff"/><rect x="0" y="0" width="11" height="3" fill="#666"/><path d="M0.500 6h10 M4 3v6.500 M7.500 3v6.500" stroke="#999" stroke-width=".8"/><rect x="6.500" y="6.500" width="7" height="7" fill="#fff" stroke="#666"/><path d="M8.500 12v-3 M10.500 12v-4 M12 12v-2" stroke="#555"/></g>
<g transform="translate(1,144)" stroke="#b8b8b8"><path d="M2.500 3.500h8v8h-8z M2.500 3.500l2-2h8l-2 2 M12.500 1.500v8l-2 2" /></g>
<g transform="translate(3,213)"><rect x="1" y="7" width="2.500" height="7" fill="#8a9bb5"/><rect x="4.500" y="2" width="2.500" height="12" fill="#777"/><rect x="8" y="6" width="2.500" height="8" fill="#8a9bb5"/><path d="M13.500 3l-6 8" stroke="#3f6fae" stroke-width="2.200"/><path d="M4.500 15c2 0 3.500-1 4-3l-2-1c-.5 1-.5 3-2 4z" fill="#3f8fbf"/></g>
</svg>
</div>
<div class="abs" style="left:569.500px;top:643px;width:152.500px;height:29px;border:2.500px solid #c93237"></div>
<svg width="80" height="70" style="left:715px;top:572px">
<path d="M70.200 6.700 L13.500 50.500 L11.300 47.600 L5.400 61.700 L20.600 57.900 L18.600 54.500 Z" fill="#e8322f"/></svg>
<div class="abs" style="left:769px;top:642px;width:83px;height:20px;background:#fdfdfd;border:1px solid #d4d4d4;border-top:0"></div>
<div class="abs" style="left:846px;top:641px;width:100px;height:26px;background:#fff;opacity:.55;filter:blur(4px)"></div>
<svg width="186" height="54" style="left:764px;top:630px" fill="none">
<g stroke="#cfcfcf" transform="translate(0.500,1.500)">
<path d="M5 29.500L60.500 5.500L78 20" stroke-width="2.500"/><path d="M33 31.500h20M40 38h13" stroke-width="2.500"/></g>
<path d="M5 29.500L60.500 5.500L78 20" stroke="#fff" stroke-width="3.500"/><path d="M30.500 25v24" stroke="#fff" stroke-width="6.500"/><path d="M33 31.500h20M40 38h13M33 45h22" stroke="#fff" stroke-width="3.500"/>
<path d="M88 47.500h92" stroke="#fff" stroke-width="2" stroke-dasharray="2 3" opacity=".7"/>
</svg>
<div class="t" style="left:852px;top:645px;font-size:22.5px;font-weight:bold;font-style:italic;color:#fff;-webkit-text-stroke:0.5px #fff;text-shadow:0 1.500px 1px #b0b0b0,1px 1px 0 #c2c2c2">系统之家</div>
</div>
</body>
</html>
